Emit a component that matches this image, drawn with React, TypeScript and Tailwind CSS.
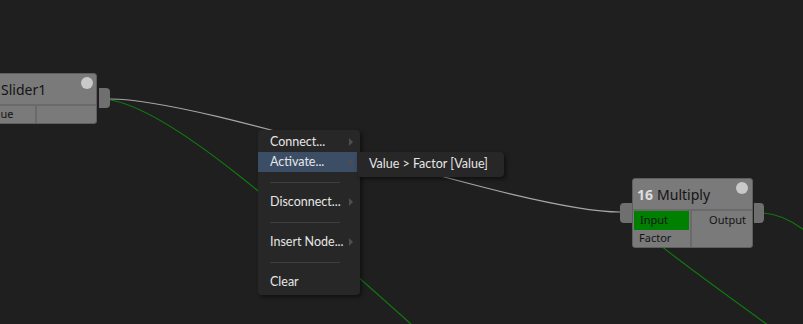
import React from "react";

const font = { fontFamily: '"Noto Sans", "Open Sans", sans-serif' };
const menuFont = { fontFamily: 'Lato, "Noto Sans", sans-serif' };

function Arrow() {
  return (
    <svg width="5" height="8" viewBox="0 0 5 8" className="absolute right-[3px] top-[6px]">
      <path d="M0 0 L4 4 L0 8 Z" fill="#4e4e4e" />
    </svg>
  );
}

function Item({ label, active, sub }: { label: string; active?: boolean; sub?: boolean }) {
  return (
    <div
      className={`relative h-[20px] mr-[3px] pl-[12px] flex items-center text-[12.5px] text-[#e6e6e6] ${
        active ? "bg-[#3b4e66]" : ""
      }`}
    >
      <span className="leading-none">{label}</span>
      {sub && <Arrow />}
    </div>
  );
}

function Sep() {
  return (
    <div className="h-[20px] flex items-center">
      <div className="ml-[12px] w-[70px] h-px bg-[#3e3e3e]" />
    </div>
  );
}

export default function App() {
  return (
    <div className="relative w-[803px] h-[324px] overflow-hidden bg-[#1f1f1f]" style={font}>
      {/* wires */}
      <svg className="absolute inset-0" width="803" height="324" viewBox="0 0 803 324">
        <path d="M110 99 C 210 99, 520 212, 620 212" stroke="#a6a6a6" strokeWidth="1.2" fill="none" />
        <path d="M110 100 C 175 110, 300 225, 440 350" stroke="#0f7a0f" strokeWidth="1.2" fill="none" />
        <path d="M625 213 C 632 225, 670 255, 800 348" stroke="#0f7a0f" strokeWidth="1.2" fill="none" />
        <path d="M763 213 C 780 214, 795 222, 810 235" stroke="#0f7a0f" strokeWidth="1.2" fill="none" />
      </svg>

      {/* Slider1 node */}
      <div className="absolute left-[-60px] top-[73px] w-[157px] h-[51px] rounded-[3px] bg-[#7a7a7a] border border-[#5e5e5e] flex flex-col">
        <div className="relative h-[30px] flex items-center pl-[60px] text-[14px] text-[#141414]">
          Slider1
          <div className="absolute right-[3px] top-[3px] w-[12px] h-[12px] rounded-full bg-[#c9c9c9]" />
        </div>
        <div className="flex-1 flex border-t-2 border-[#6a6a6a]">
          <div className="w-[96px] flex items-center pl-[44px] text-[11px] text-[#141414] border-r-2 border-[#6a6a6a]">
            Value
          </div>
          <div className="flex-1" />
        </div>
      </div>
      <div className="absolute left-[99px] top-[88px] w-[11px] h-[20px] rounded-r-[4px] bg-[#6f6f6f]" />

      {/* Multiply node */}
      <div className="absolute left-[620px] top-[203px] w-[12px] h-[20px] rounded-l-[4px] bg-[#6f6f6f]" />
      <div className="absolute left-[754px] top-[203px] w-[10px] h-[20px] rounded-r-[4px] bg-[#6f6f6f]" />
      <div className="absolute left-[632px] top-[178px] w-[121px] h-[70px] rounded-[3px] bg-[#7a7a7a] border border-[#5e5e5e] flex flex-col">
        <div className="relative h-[30px] flex items-center pl-[4px] text-[14px] text-[#141414]">
          <span className="font-bold text-[#dedede] mr-[4px]">16</span>
          <span>Multiply</span>
          <div className="absolute right-[4px] top-[3px] w-[12px] h-[12px] rounded-full bg-[#c9c9c9]" />
        </div>
        <div className="flex-1 flex border-t-2 border-[#6a6a6a]">
          <div className="w-[59px] flex flex-col border-r-2 border-[#6a6a6a]">
            <div className="h-[19px] mx-[1px] bg-[#008000] flex items-center pl-[6px] text-[11px] text-[#141414]">
              Input
            </div>
            <div className="flex-1 flex items-center pl-[6px] text-[11px] text-[#141414]">Factor</div>
          </div>
          <div className="flex-1 flex flex-col">
            <div className="h-[19px] flex items-center justify-end pr-[6px] text-[11px] text-[#141414]">
              Output
            </div>
          </div>
        </div>
      </div>

      {/* Context menu */}
      <div
        className="absolute left-[258px] top-[130px] w-[102px] pt-[2px] pb-[3px] rounded-[4px] bg-[#272727] shadow-[2px_2px_4px_rgba(0,0,0,0.5)] flex flex-col"
        style={menuFont}
      >
        <Item label="Connect..." sub />
        <Item label="Activate..." active sub />
        <Sep />
        <Item label="Disconnect..." sub />
        <Sep />
        <Item label="Insert Node..." sub />
        <Sep />
        <Item label="Clear" />
      </div>

      {/* Submenu */}
      <div
        className="absolute left-[357px] top-[152px] w-[147px] h-[25px] rounded-[4px] bg-[#272727] shadow-[2px_2px_4px_rgba(0,0,0,0.5)] flex items-center pl-[12px] text-[12.5px] text-[#e6e6e6]"
        style={menuFont}
      >
        Value &gt; Factor [Value]
      </div>
    </div>
  );
}
